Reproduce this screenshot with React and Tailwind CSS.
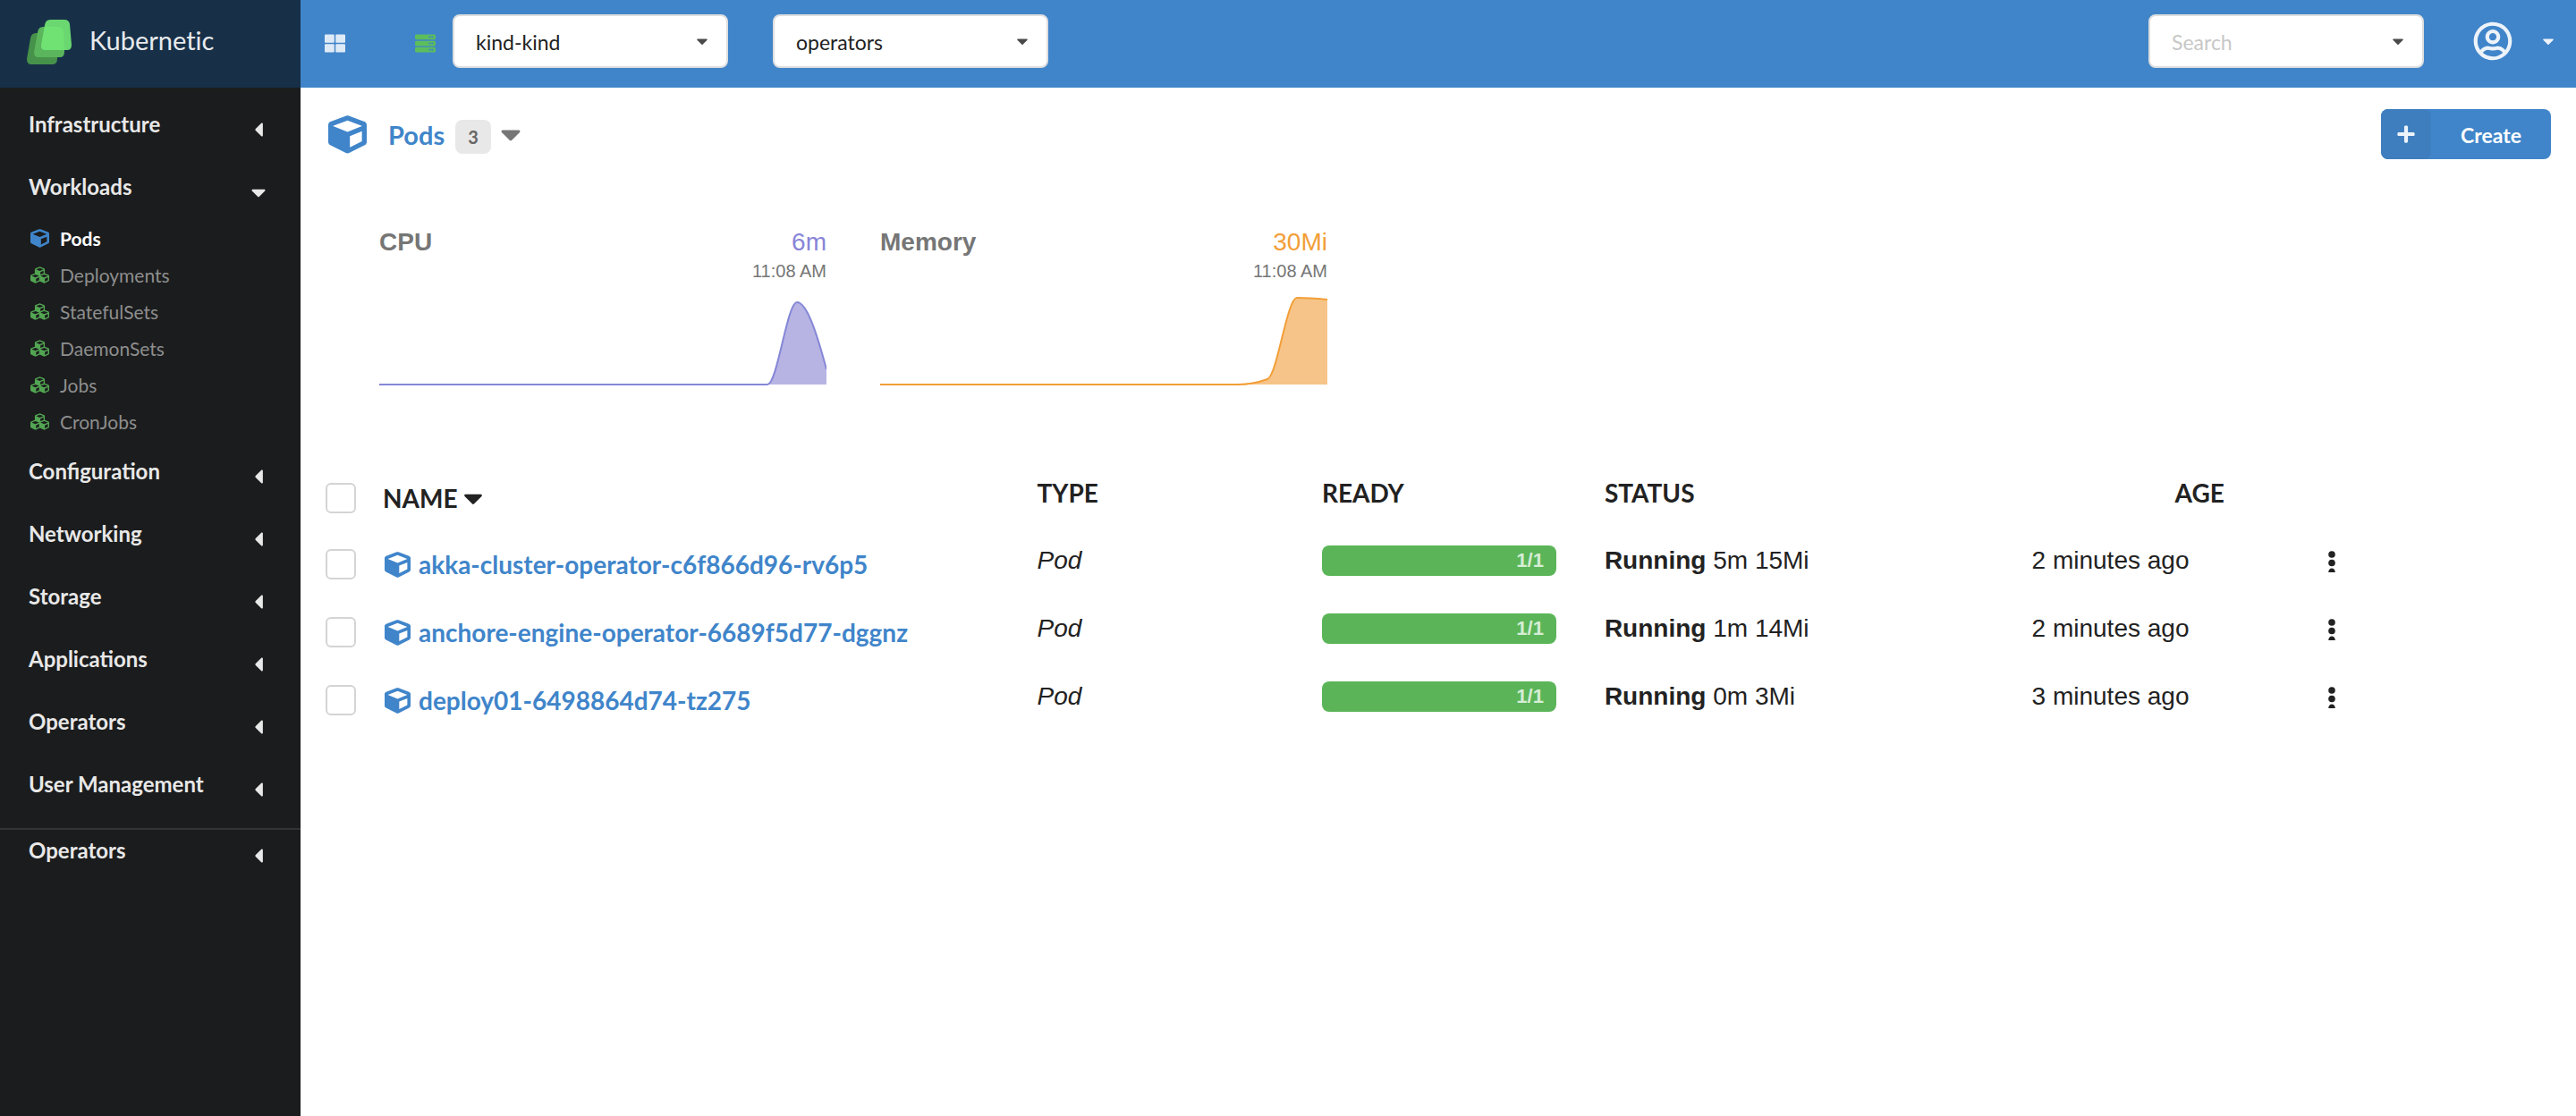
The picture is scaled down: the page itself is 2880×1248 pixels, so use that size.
import { FaCaretDown, FaCaretLeft, FaCube, FaCubes, FaPlus, FaRegUserCircle, FaServer, FaThLarge } from "react-icons/fa";

const workloads = ["Deployments", "StatefulSets", "DaemonSets", "Jobs", "CronJobs"];
const sections = ["Configuration", "Networking", "Storage", "Applications", "Operators", "User Management"];
const pods = [
  { name: "akka-cluster-operator-c6f866d96-rv6p5", usage: "5m 15Mi", age: "2 minutes ago" },
  { name: "anchore-engine-operator-6689f5d77-dggnz", usage: "1m 14Mi", age: "2 minutes ago" },
  { name: "deploy01-6498864d74-tz275", usage: "0m 3Mi", age: "3 minutes ago" },
];

function Logo() {
  return (
    <svg viewBox="0 0 50 50" className="size-[50px]" aria-hidden="true">
      <path d="M10 15H29Q35 15 35 21L34 44Q34 50 28 50H5Q0 50 0 44L4 21Q5 15 10 15Z" fill="#47924a" />
      <path d="M18 8H35Q40 8 41 13L42 36Q42 42 37 42H13Q8 42 8 37L12 14Q13 8 18 8Z" fill="#5ab55c" />
      <path d="M26 0H42Q47 0 48 5L50 28Q50 34 45 34H21Q16 34 16 29L20 6Q21 0 26 0Z" fill="#6bd770" />
      <path d="M20 8H35Q40 8 41 13L42 34H21Q16 34 16 29Z" fill="#6fe273" />
    </svg>
  );
}

function SectionButton({ label, open = false, compact = false }) {
  const Caret = open ? FaCaretDown : FaCaretLeft;
  return (
    <button
      type="button"
      aria-expanded={open}
      className={`flex w-full items-center justify-between pr-[34px] pl-8 text-left text-[24px] leading-8 font-bold text-[#e8e8e8] ${compact ? "h-[46px]" : "h-[70px]"}`}
    >
      {label}
      <Caret className="mt-3 size-[26px]" />
    </button>
  );
}

function Sidebar() {
  return (
    <aside className="w-[336px] shrink-0 bg-[#1b1c1d]">
      <div className="flex h-[98px] items-center gap-5 bg-[#173048] pb-1 pl-[30px] text-[29px] text-[#e8ebee]">
        <Logo />
        <span className="pb-1 [font-variant-ligatures:none]">Kubernetic</span>
      </div>
      <nav aria-label="Resources" className="pt-1.5">
        <SectionButton label="Infrastructure" />
        <SectionButton label="Workloads" open />
        <ul className="pt-0.5 text-[21px] text-[#8d8e8e]">
          <li>
            <a href="#pods" aria-current="page" className="flex h-[41px] items-center gap-3 pl-[34px] font-bold text-white">
              <FaCube className="size-[21px] text-[#4085ca]" />
              Pods
            </a>
          </li>
          {workloads.map((name) => (
            <li key={name}>
              <a href={`#${name.toLowerCase()}`} className="flex h-[41px] items-center gap-3 pl-[34px]">
                <FaCubes className="size-[21px] text-[#52a552]" />
                {name}
              </a>
            </li>
          ))}
        </ul>
        {sections.map((name) => (
          <SectionButton key={name} label={name} />
        ))}
        <div className="mt-3.5 border-t-2 border-[#333435]">
          <SectionButton label="Operators" compact />
        </div>
      </nav>
    </aside>
  );
}

const fieldClass =
  "h-[60px] w-full appearance-none rounded-lg border-2 border-[#dededf] bg-white pt-0.5 pr-12 pl-6 text-[23px] text-[#222222] placeholder:text-[#c7c7c7]";

function Field({ children }) {
  return (
    <div className="relative w-[308px]">
      {children}
      <FaCaretDown className="pointer-events-none absolute top-5 right-[19px] size-5 text-[#4a4a4a]" />
    </div>
  );
}

function TopBar() {
  return (
    <header className="flex h-[98px] items-start bg-[#4085ca] pt-4 pr-[21px] pl-[27px]">
      <button type="button" aria-label="Dashboard" className="flex h-[60px] items-center pt-1">
        <FaThLarge className="size-[23px] text-[#deeaf6]" />
      </button>
      <div className="ml-[78px] flex h-[60px] items-center pt-1">
        <FaServer className="size-[23px] text-[#5cbd5d]" />
      </div>
      <div className="ml-[19px] flex gap-[50px]">
        <Field>
          <select aria-label="Cluster" defaultValue="kind-kind" className={fieldClass}>
            <option>kind-kind</option>
          </select>
        </Field>
        <Field>
          <select aria-label="Namespace" defaultValue="operators" className={fieldClass}>
            <option>operators</option>
          </select>
        </Field>
      </div>
      <div className="ml-auto">
        <Field>
          <input type="text" aria-label="Search" placeholder="Search" className={fieldClass} />
        </Field>
      </div>
      <button type="button" aria-label="Account" className="ml-[55px] flex h-[60px] items-center gap-[30px] text-[#edf3fa]">
        <FaRegUserCircle className="size-11" />
        <FaCaretDown className="size-5" />
      </button>
    </header>
  );
}

function Metric({ label, value, valueClass, stroke, fill, line }) {
  return (
    <section aria-label={label} className="w-[500px]">
      <div className="flex items-start justify-between text-[28px] leading-[34px]">
        <h2 className="font-bold text-[#767676]">{label}</h2>
        <div className="text-right">
          <div className={valueClass}>{value}</div>
          <div className="text-[20px] leading-[30px] text-[#767676]">11:08 AM</div>
        </div>
      </div>
      <svg viewBox="0 0 500 102" className="mt-3 block w-full" aria-hidden="true">
        <path d={`${line}V100H0Z`} fill={fill} />
        <path d={line} fill="none" stroke={stroke} strokeWidth="2" />
      </svg>
    </section>
  );
}

function Check({ label }) {
  return (
    <input type="checkbox" aria-label={label} className="block size-[34px] appearance-none rounded-md border-2 border-[#d4d4d5] bg-white checked:bg-[#4085ca]" />
  );
}

function PodTable() {
  return (
    <table className="mt-[88px] w-full table-fixed text-left text-[28px] leading-[34px] text-[#222222]">
      <colgroup>
        <col className="w-16" />
        <col className="w-[29.4%]" />
        <col className="w-[12.8%]" />
        <col className="w-[12.7%]" />
        <col className="w-[19.2%]" />
        <col className="w-[12.8%]" />
        <col />
      </colgroup>
      <thead className="font-['Lato',sans-serif]">
        <tr className="h-[74px] align-top">
          <th className="pt-5"><Check label="Select all" /></th>
          <th className="pt-5" aria-sort="descending">
            <button type="button" className="flex items-center font-bold">
              NAME
              <FaCaretDown className="size-[34px]" />
            </button>
          </th>
          <th className="pt-3.5">TYPE</th>
          <th className="pt-3.5">READY</th>
          <th className="pt-3.5">STATUS</th>
          <th className="pt-3.5 pl-40">AGE</th>
          <td />
        </tr>
      </thead>
      <tbody>
        {pods.map((pod) => (
          <tr key={pod.name} className="h-[76px] align-top">
            <td className="pt-5"><Check label={`Select ${pod.name}`} /></td>
            <td className="pt-5">
              <a href={`#${pod.name}`} className="flex items-center gap-[9px] font-['Lato',sans-serif] font-bold whitespace-nowrap text-[#4085ca]">
                <FaCube className="ml-0.5 size-[29px]" />
                {pod.name}
              </a>
            </td>
            <td className="pt-4 italic">Pod</td>
            <td className="pt-4 pr-[54px]">
              <div role="progressbar" aria-label="Ready" aria-valuenow={1} aria-valuemax={1} className="rounded-lg bg-[#5bb558] pr-3.5 text-right text-[22px] font-bold text-[#d6edd5]">
                1/1
              </div>
            </td>
            <td className="pt-4"><b>Running</b> {pod.usage}</td>
            <td className="pt-4">{pod.age}</td>
            <td className="pt-5">
              <button type="button" aria-label={`Actions for ${pod.name}`} className="block pl-3">
                <svg viewBox="0 0 10 28" className="h-7 w-2.5" fill="#222222">
                  <circle cx="5" cy="6" r="3.8" />
                  <circle cx="5" cy="15.5" r="3.8" />
                  <path d="M1.2 26a3.8 4.5 0 0 1 7.6 0Z" />
                </svg>
              </button>
            </td>
          </tr>
        ))}
      </tbody>
    </table>
  );
}

export default function App() {
  return (
    <div className="flex min-h-screen bg-white font-['Lato',sans-serif]">
      <Sidebar />
      <div className="min-w-0 flex-1">
        <TopBar />
        <main className="px-7 pt-6 font-['Liberation_Sans',sans-serif]">
          <div className="flex h-14 items-center font-['Lato',sans-serif]">
            <FaCube className="ml-[3px] size-[43px] text-[#4085ca]" />
            <h1 className="ml-6 pt-0.5 text-[29px] leading-9 font-bold text-[#4085ca]">Pods</h1>
            <span className="mt-1.5 ml-3 flex h-[38px] w-10 items-center justify-center rounded-lg bg-[#e8e8e8] text-[20px] font-bold text-[#666666]">3</span>
            <button type="button" aria-label="Pod options" className="ml-1">
              <FaCaretDown className="size-9 text-[#767676]" />
            </button>
            <button type="button" className="ml-auto flex h-14 items-center rounded-lg bg-[#4085ca] text-[23px] font-bold text-white">
              <span className="flex h-14 w-14 items-center justify-center rounded-lg bg-[#3e7ebf]">
                <FaPlus className="size-[22px] text-[#ecf3fa]" />
              </span>
              <span className="px-[33px] pt-0.5">Create</span>
            </button>
          </div>
          <div className="mt-[76px] flex gap-[60px] pl-[60px]">
            <Metric
              label="CPU"
              value="6m"
              valueClass="text-[#8884d8]"
              stroke="#8587d6"
              fill="#b7b4e4"
              line="M0 100H434C445 100 456 8 467 8C478 8 489 42 500 83"
            />
            <Metric
              label="Memory"
              value="30Mi"
              valueClass="text-[#f29e38]"
              stroke="#f29e38"
              fill="#f6c488"
              line="M0 100H400C411 100 422 98 433 94C444 90 455 3 466 3C477 3 489 4 500 5"
            />
          </div>
          <PodTable />
        </main>
      </div>
    </div>
  );
}
